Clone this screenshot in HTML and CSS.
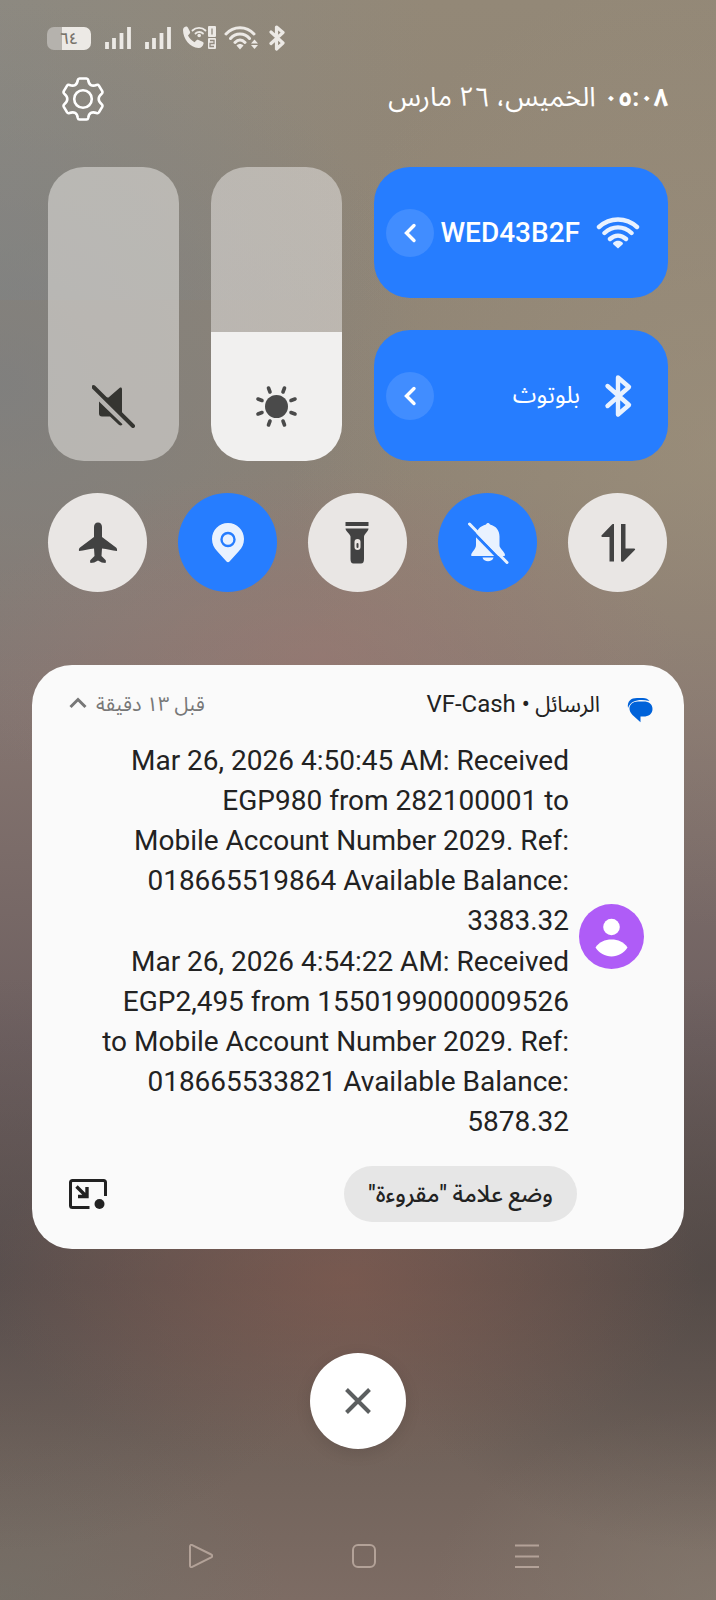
FILE: index.html
```html
<!DOCTYPE html>
<html lang="ar" dir="rtl">
<head>
    <meta charset="UTF-8">
    <meta name="viewport" content="width=device-width, initial-scale=1.0">
    <title>الرسائل</title>
    <link rel="stylesheet" href="styles.css">
</head>
<body>
    <div class="status-bar" dir="ltr">
        <div class="battery"><span>٦٤</span></div>
        <svg class="signal" width="26" height="26" viewBox="0 0 26 26"><path d="M2 17v7M9 13v11M16.500 8v16M24 2v22" stroke="#ece9e5" stroke-width="3.800" fill="none"/></svg>
        <svg class="signal" width="26" height="26" viewBox="0 0 26 26"><path d="M2 17v7M9 13v11M16.500 8v16M24 2v22" stroke="#ece9e5" stroke-width="3.800" fill="none"/></svg>
        <svg class="call" width="34" height="26" viewBox="0 0 34 26">
            <path d="M1 5c0-2 1-3 3-3.500 1 0 1.500.3 2 1.200l2 4c.3.800.2 1.500-.5 2L6 10.500c1.500 3 3.500 5 6.500 6.700l2-2c.6-.5 1.300-.6 2-.3l4 1.800c1 .5 1.300 1 1 2-.7 2.500-2.500 4.500-5 4.300C8 22.500 1 14 1 5z" fill="#ece9e5"/>
            <path d="M10.500 5.500c3.500-3.500 9.500-3.500 13 0M13.500 8.500c2-2 5.500-2 7.500 0" fill="none" stroke="#ece9e5" stroke-width="1.800" stroke-linecap="round"/>
            <circle cx="17.200" cy="10.500" r="1.800" fill="#ece9e5"/>
            <rect x="26" y="1" width="8" height="11" rx="1" fill="#ece9e5"/>
            <rect x="26" y="13" width="8" height="11" rx="1" fill="#ece9e5"/>
            <path d="M30 3.500v6M28 15.500h4v3h-4v3h4" fill="none" stroke="#928b80" stroke-width="1.300"/>
        </svg>
        <svg class="wifi-small" width="34" height="26" viewBox="0 0 34 26">
            <path d="M2 9C9.500.5 22.500.5 30 9M6.500 13.500c5-6 14-6 19 0M11 17.500c3-3.300 7-3.300 10 0" fill="none" stroke="#ece9e5" stroke-width="3" stroke-linecap="round"/>
            <path d="M12.500 20.500c2-2 5-2 7 0L16 24.500z" fill="#ece9e5"/>
            <path d="M30.500 14.500l3.500 4h-7zM30.500 24l3.500-4h-7z" fill="#ece9e5"/>
        </svg>
        <svg width="16" height="26" viewBox="0 0 16 26"><path d="M2 7l12 11-6.500 6V2L14 7.500 2 18.500" fill="none" stroke="#ece9e5" stroke-width="3.200" stroke-linejoin="round" stroke-linecap="round"/></svg>
    </div>

    <header class="header">
        <div class="date"><span class="time">٠٥:٠٨</span>الخميس، ٢٦ مارس</div>
        <button class="icon-button" aria-label="الإعدادات">
            <svg width="42" height="44" viewBox="0 0 42 44" fill="none" stroke="#fff" stroke-width="2.600" stroke-linejoin="round">
                <path d="M17.500 1.500h7c1 0 1.500.6 1.700 1.500.6 5 3.800 6.700 8.300 5 1-.4 1.900-.2 2.400.6l3.300 5.600c.5 1 .3 1.800-.5 2.500-4 3.300-4 7.300 0 10.600.8.700 1 1.500.5 2.500l-3.300 5.600c-.5.800-1.400 1-2.400.6-4.500-1.700-7.700 0-8.300 5-.2.900-.7 1.500-1.700 1.500h-7c-1 0-1.500-.6-1.700-1.500-.6-5-3.800-6.700-8.300-5-1 .4-1.900.2-2.400-.6l-3.300-5.600c-.5-1-.3-1.800.5-2.500 4-3.300 4-7.300 0-10.600-.8-.7-1-1.500-.5-2.500L5.100 8.600c.5-.8 1.400-1 2.400-.6 4.500 1.700 7.700 0 8.300-5 .2-.9.700-1.500 1.700-1.500z"/>
                <circle cx="21" cy="22" r="8.800"/>
            </svg>
        </button>
    </header>

    <main>
        <section class="panel">
            <div class="tiles">
                <div class="tile">
                    <button class="tile-main">
                        <svg width="44" height="44" viewBox="0 0 44 44">
                            <path d="M3 16c11-10 27-10 38 0M8.500 22c8-7.500 19-7.500 27 0M14 28c5-4.500 11-4.500 16 0" fill="none" stroke="#e9f2ff" stroke-width="4.400" stroke-linecap="round"/>
                            <path d="M17.500 31.500c2.500-2.500 6.500-2.500 9 0 .6.600.6 1.300 0 1.900L22 37.500l-4.500-4.100c-.6-.6-.6-1.300 0-1.900z" fill="#e9f2ff"/>
                        </svg>
                        <span class="network">WED43B2F</span>
                    </button>
                    <button class="expand" aria-label="شبكات Wi-Fi"><svg width="14" height="20" viewBox="0 0 14 20"><path d="M11 2.500L3.500 10l7.500 7.500" fill="none" stroke="#fff" stroke-width="3.400" stroke-linecap="round"/></svg></button>
                </div>
                <div class="tile">
                    <button class="tile-main">
                        <svg width="44" height="44" viewBox="0 0 44 44"><path d="M11.500 12L33 31l-11 9.500v-37L33 13 11.500 32" fill="none" stroke="#e9f2ff" stroke-width="4.400" stroke-linejoin="round" stroke-linecap="round"/></svg>
                        <span>بلوتوث</span>
                    </button>
                    <button class="expand" aria-label="أجهزة بلوتوث"><svg width="14" height="20" viewBox="0 0 14 20"><path d="M11 2.500L3.500 10l7.500 7.500" fill="none" stroke="#fff" stroke-width="3.400" stroke-linecap="round"/></svg></button>
                </div>
            </div>
            <label class="slider">
                <input class="brightness" type="range" value="44" aria-label="السطوع">
                <svg width="44" height="44" viewBox="0 0 44 44">
                    <circle cx="21.500" cy="22.500" r="11.500" fill="#4a4a4a"/>
                    <path d="M29.500 4l-1.500 4M13.500 4L15 8M29.500 41L28 37M13.500 41l1.500-4M3 15l4 1.500M3 30l4-1.500M40 15l-4 1.500M40 30l-4-1.500" stroke="#4a4a4a" stroke-width="3.600" stroke-linecap="round"/>
                </svg>
            </label>
            <label class="slider">
                <input class="volume" type="range" value="0" aria-label="مستوى الصوت">
                <svg width="44" height="44" viewBox="0 0 44 44">
                    <path d="M16.500 13.500L27.500 4c1.200-.9 2.500-.4 2.500 1.200V31L13.500 13.500zM7 17.500l23.500 22.800c-1 1.500-2.500 1.500-3.700.5L18 32.500h-8c-2 0-3-1-3-3z" fill="#353531"/>
                    <path d="M7 14l24 24" stroke="#b6b3b0" stroke-width="2"/>
                    <path d="M1.500 3L41 42" stroke="#353531" stroke-width="4" stroke-linecap="round"/>
                </svg>
            </label>
        </section>

        <section class="toggles">
            <button class="toggle" aria-label="بيانات الجوال">
                <svg width="40" height="40" viewBox="0 0 40 40" fill="#424242"><path d="M16 1v37.500h-4.500V14H4.500c-1.200 0-1.500-1-.8-1.700L14 1.500c.7-.7 2-.5 2-.5zM23 1h4.500v24.500H36c1.200 0 1.500.8.800 1.500L25.500 38.500c-.8.600-2.500.5-2.500-1z"/></svg>
            </button>
            <button class="toggle on" aria-label="عدم الإزعاج">
                <svg width="42" height="42" viewBox="0 0 42 42">
                    <path d="M19 2.500c1-2 3-2 4 0 6 1.500 9.500 6 9.500 12v9c0 3 5.500 6.500 5.500 9.500 0 .7-.5 1-1.200 1H5.200c-.8 0-1.200-.5-1-1.300C5 29.500 9 27 9 23v-8.500c0-6 4-10.500 10-12zM15.500 35.500h11c-1 5-10 5-11 0z" fill="#e9f2ff"/>
                    <path d="M1.500 5.500l37 38" stroke="#267dff" stroke-width="3"/>
                    <path d="M2.500 2L40 40.500" stroke="#e9f2ff" stroke-width="3" stroke-linecap="round"/>
                </svg>
            </button>
            <button class="toggle" aria-label="مصباح">
                <svg width="40" height="44" viewBox="0 0 40 44">
                    <path d="M7.500 1h23v4h-23zM7.500 7.500h23c0 3-4 5-4.500 8V38c0 3-1 4.500-3 4.500h-7.500c-2 0-3-1.500-3-4.500V15.500c-.5-3-5-5-5-8z" fill="#424242"/>
                    <rect x="16.500" y="18" width="6" height="11" rx="3" fill="#ece7e4"/><rect x="18.500" y="22" width="2" height="5" rx="1" fill="#424242"/>
                </svg>
            </button>
            <button class="toggle on" aria-label="الموقع">
                <svg width="40" height="40" viewBox="0 0 40 40">
                    <path d="M20 0c9 0 16 7 16 16 0 5-2 9-5 12L21.500 38.500c-1 1-2 1-3 0L9 28c-3-3-5-7-5-12C4 7 11 0 20 0z" fill="#e9f2ff"/>
                    <circle cx="20" cy="16.500" r="6.500" fill="none" stroke="#267dff" stroke-width="2.400"/>
                </svg>
            </button>
            <button class="toggle" aria-label="وضع الطيران">
                <svg width="40" height="42" viewBox="0 0 40 42"><path d="M20 .5c2.500 0 4 2 4 4.500v10l14 10.500c1 .8 1.300 2 1 3.500-5-.5-10-2-15-2.500l-.5 7.500 4 4c.6.700.5 2 0 3-2.500 0-5-.8-7.500-2.500-2.500 1.700-5 2.500-7.500 2.500-.5-1-.6-2.300 0-3l4-4-.5-7.500c-5 .5-10 2-15 2.500-.3-1.500 0-2.700 1-3.500L16 15V5C16 2.500 17.500.5 20 .5z" fill="#424242"/></svg>
            </button>
        </section>

        <article class="card">
            <div class="card-header">
                <svg width="26" height="36" viewBox="0 -10 26 36">
                    <path d="M1 11C0 4 4 1 10 1h6c3 0 5 1 6.500 3C13 2 4 3 1 11z" fill="#0062d9"/>
                    <path d="M11 4.500h5.500c5.500 0 9 2.500 9 7.500s-4 7.500-9 7.500H13.500v5.800L5.500 18C-.5 12 3 4.500 11 4.500z" fill="#0062d9"/>
                </svg>
                <h2 class="app">الرسائل <span class="sender">• VF-Cash</span></h2>
                <span class="ago">قبل ١٣ دقيقة</span>
                <button class="icon-button" aria-label="طي"><svg width="18" height="18" viewBox="0 0 18 18"><path d="M1.500 11L9 3.500l7.500 7.500" fill="none" stroke="#777" stroke-width="3"/></svg></button>
            </div>
            <div class="card-body">
                <svg class="avatar" width="65" height="65" viewBox="0 0 65 65">
                    <circle cx="32.500" cy="32.500" r="32.500" fill="#af5cf7"/>
                    <circle cx="32.500" cy="23" r="8.300" fill="#fff"/>
                    <path d="M16.500 43.500C20 38 26 35.500 32.500 35.500S45 38 48.500 43.500C45 49 39 52.500 32.500 52.500S20 49 16.500 43.500z" fill="#fff"/>
                </svg>
                <div class="messages" dir="ltr">
                    <p>Mar 26, 2026 4:50:45 AM: Received<br>EGP980 from 282100001 to<br>Mobile Account Number 2029. Ref:<br>018665519864 Available Balance:<br>3383.32</p>
                    <p>Mar 26, 2026 4:54:22 AM: Received<br>EGP2,495 from 1550199000009526<br>to Mobile Account Number 2029. Ref:<br>018665533821 Available Balance:<br>5878.32</p>
                </div>
            </div>
            <div class="card-actions">
                <button class="mark-read">وضع علامة "مقروءة"</button>
                <button class="icon-button" aria-label="نافذة عائمة">
                    <svg width="38" height="32" viewBox="0 0 38 32" fill="none" stroke="#222" stroke-width="3">
                        <path d="M20.500 29.500h-17c-1.300 0-2-.7-2-2v-23c0-1.300.7-2 2-2h31c1.300 0 2 .7 2 2V18" stroke-linejoin="round"/>
                        <path d="M7.500 8.500l10 10M18 9v9.500H9" stroke-width="3.400"/>
                        <circle cx="30.500" cy="26" r="5" fill="#222" stroke="none"/>
                    </svg>
                </button>
            </div>
        </article>

        <button class="close" aria-label="مسح الكل">
            <svg width="28" height="28" viewBox="0 0 28 28"><path d="M2.500 2.500l23 23M25.500 2.500l-23 23" stroke="#5c5f60" stroke-width="4"/></svg>
        </button>
    </main>

    <nav class="nav-bar" dir="ltr">
        <button class="icon-button" aria-label="رجوع"><svg width="24" height="24" viewBox="0 0 24 24"><path d="M1 2.500c0-1.500 1-2 2.200-1.400l19 9.400c1.400.8 1.400 2 0 2.800l-19 9.600C2 23.500 1 23 1 21.500z"/></svg></button>
        <button class="icon-button" aria-label="الرئيسية"><svg width="24" height="24" viewBox="0 0 24 24"><rect x="1" y="1" width="22" height="22" rx="5"/></svg></button>
        <button class="icon-button" aria-label="التطبيقات الأخيرة"><svg width="24" height="24" viewBox="0 0 24 24"><path d="M0 1.500h24M0 12.500h24M0 23h24"/></svg></button>
    </nav>
</body>
</html>
```
FILE: styles.css
```css
* {
    margin: 0;
    padding: 0;
    box-sizing: border-box;
}

body {
    min-height: 100vh;
    display: flex;
    flex-direction: column;
    font-family: Roboto, "Noto Sans Arabic", "Noto Sans", "DejaVu Sans", sans-serif;
    background:
        radial-gradient(ellipse 50% 12% at 45% 41%, rgba(160, 122, 116, 0.5), transparent),
        radial-gradient(ellipse 50% 12% at 48% 80%, rgba(134, 92, 80, 0.6), transparent),
        radial-gradient(ellipse 60% 30% at 100% 28%, rgba(164, 150, 126, 0.5), transparent),
        radial-gradient(ellipse 50% 18% at 100% 79%, rgba(74, 68, 66, 0.6), transparent),
        radial-gradient(ellipse 50% 18% at 0% 79%, rgba(80, 74, 76, 0.5), transparent),
        radial-gradient(ellipse 60% 24% at 0% 24%, rgba(122, 126, 130, 0.7), transparent),
        radial-gradient(ellipse 40% 12% at 0% 100%, rgba(112, 112, 104, 0.6), transparent),
        radial-gradient(ellipse 40% 12% at 100% 100%, rgba(134, 126, 114, 0.6), transparent),
        linear-gradient(to right, rgba(134, 138, 138, 0.5), transparent 60%) top / 100% 300px no-repeat,
        linear-gradient(#938877, #8d8274 30%, #84746f 45%, #6e6060 65%, #62544f 80%, #70625a 90%, #7d6c64);
}

button {
    border: none;
    background: none;
    font: inherit;
    color: inherit;
    cursor: pointer;
}

svg {
    display: block;
    flex: none;
}

.status-bar {
    display: flex;
    align-items: center;
    gap: 14px;
    padding: 25px 47px 0;
}

.battery {
    width: 44px;
    height: 23px;
    border-radius: 7px;
    background: linear-gradient(to right, #b5b2ad 35%, #ece9e5 35%);
    color: #77726a;
    font-size: 16px;
    font-weight: 500;
    line-height: 23px;
    text-align: center;
}

.call, .wifi-small {
    margin-left: -3px;
    margin-right: -3px;
}

.header {
    display: flex;
    align-items: flex-start;
    justify-content: space-between;
    height: 44px;
    margin: 26px 48px 0 62px;
    color: white;
}

.date {
    font-size: 27px;
    line-height: 40px;
}

.time {
    margin-left: 8px;
    font-size: 25px;
    font-weight: bold;
}

.panel {
    display: grid;
    grid-template-columns: 294fr 131fr 131fr;
    gap: 32px;
    padding: 46px 48px 32px;
}

.tiles {
    display: grid;
    gap: 32px;
}

.tile {
    display: flex;
    align-items: center;
    height: 131px;
    padding: 0 28px 0 12px;
    border-radius: 36px;
    background-color: #267dff;
    color: white;
}

.tile-main {
    flex: 1;
    display: flex;
    align-items: center;
    gap: 16px;
    font-size: 24px;
}

.network {
    font-size: 28px;
    font-weight: 500;
}

.expand {
    display: flex;
    align-items: center;
    justify-content: center;
    width: 48px;
    height: 48px;
    border-radius: 50%;
    background-color: #418dff;
}

.slider {
    display: grid;
    justify-items: center;
    align-items: end;
}
.slider input, .slider svg {
    grid-area: 1 / 1;
}
.slider svg {
    margin-bottom: 33px;
    pointer-events: none;
}
.slider input {
    appearance: none;
    writing-mode: vertical-lr;
    direction: rtl;
    width: 100%;
    height: 100%;
    border-radius: 36px;
}
.slider input::-webkit-slider-thumb {
    appearance: none;
    width: 1px;
    height: 1px;
}
.brightness {
    background: linear-gradient(to top, #f1f0ef 44%, rgba(220, 217, 214, 0.6) 44%);
}
.volume {
    background-color: rgba(220, 218, 215, 0.6);
}

.toggles {
    display: flex;
    justify-content: space-between;
    padding: 0 49px 0 48px;
}

.toggle {
    display: flex;
    align-items: center;
    justify-content: center;
    width: 99px;
    height: 99px;
    border-radius: 50%;
    background-color: #e9e6e4;
}
.toggle.on {
    background-color: #267dff;
}

.card {
    margin: 73px 32px 0;
    padding: 20px 31px 27px 37px;
    border-radius: 40px;
    background-color: #fafafa;
    color: #222;
}

.card-header {
    display: flex;
    align-items: center;
    height: 40px;
}

.app {
    flex: 1;
    margin-right: 27px;
    font-size: 22px;
    font-weight: normal;
}

.sender {
    font-size: 24px;
}

.ago {
    margin-left: 9px;
    color: #777;
    font-size: 20px;
}

.card-body {
    display: flex;
    align-items: center;
    gap: 10px;
    margin-top: 16px;
    padding-right: 9px;
}

.avatar {
    margin-bottom: 10px;
}

.messages {
    flex: 1;
    display: grid;
    gap: 1px;
    font-size: 28px;
    line-height: 40px;
    text-align: right;
}

.card-actions {
    display: flex;
    align-items: center;
    justify-content: space-between;
    margin-top: 24px;
    padding-right: 76px;
}

.mark-read {
    height: 56px;
    padding: 0 24px;
    border-radius: 28px;
    background-color: #e6e6e6;
    font-size: 23px;
    font-weight: 500;
}

.close {
    display: flex;
    align-items: center;
    justify-content: center;
    width: 96px;
    height: 96px;
    margin: 104px auto 0;
    border-radius: 50%;
    background-color: white;
    box-shadow: 0 4px 16px rgba(0, 0, 0, 0.1);
}

.nav-bar {
    display: flex;
    justify-content: center;
    gap: 139px;
    margin-top: auto;
    padding: 32px 0 32px 12px;
}
.nav-bar svg {
    fill: none;
    stroke: #b3a298;
    stroke-width: 2;
}
```
